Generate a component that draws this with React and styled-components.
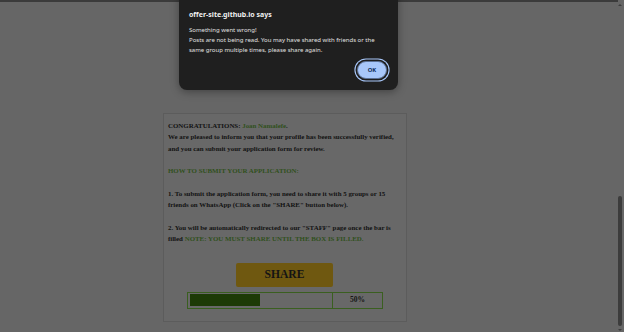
import React from "react";
import styled, { createGlobalStyle } from "styled-components";

const GlobalStyle = createGlobalStyle`
  html, body {
    margin: 0;
    padding: 0;
    background: #666666;
    overflow: hidden;
  }
  body {
    width: 624px;
    height: 332px;
    position: relative;
  }
`;

const TopStrip = styled.div`
  height: 2px;
  width: 618px;
  background: #3b3b3b;
`;

const Page = styled.div`
  display: flex;
  padding: 111px 0 0 163px;
`;

const Card = styled.div`
  width: 244px;
  height: 209px;
  box-sizing: border-box;
  background: #686868;
  border: 1px solid #5c5c5c;
  padding: 6px 4px 0 4px;
  font-family: "Liberation Serif", "Times New Roman", serif;
  font-weight: bold;
  font-size: 6.9px;
  line-height: 11.3px;
  color: #121212;
  display: flex;
  flex-direction: column;
`;

const Para = styled.p`
  margin: 0 0 11.3px 0;
  color: ${(p) => (p.green ? "#30501c" : "#121212")};
  &:last-child {
    margin-bottom: 0;
  }
`;

const Green = styled.span`
  color: #30501c;
`;

const ShareButton = styled.div`
  margin: 7px 0 0 68px;
  width: 97px;
  height: 24px;
  border-radius: 2px;
  background: #6f5810;
  display: flex;
  align-items: center;
  justify-content: center;
  font-size: 11.6px;
  color: #141414;
`;

const Bar = styled.div`
  margin: 5px 0 0 19px;
  width: 196px;
  height: 17px;
  box-sizing: border-box;
  border: 1.5px solid #3a5f20;
  display: flex;
`;

const Track = styled.div`
  flex: 0 0 145px;
  box-sizing: border-box;
  border-right: 1.5px solid #3a5f20;
  padding: 1.5px;
  display: flex;
`;

const Fill = styled.div`
  background: #1d3a06;
  height: 100%;
`;

const Percent = styled.div`
  flex: 1;
  display: flex;
  align-items: center;
  justify-content: center;
  font-size: 7.5px;
  color: #151515;
`;

const Dialog = styled.div`
  position: absolute;
  top: -10px;
  left: 179px;
  width: 219px;
  height: 100px;
  box-sizing: border-box;
  padding: 20px 8px 0 10px;
  background: #1f1f1f;
  border-radius: 8px;
  box-shadow: 0 2px 8px rgba(0, 0, 0, 0.35);
  font-family: "Noto Sans", "Open Sans", sans-serif;
  color: #e3e3e3;
  display: flex;
  flex-direction: column;
`;

const DialogTitle = styled.div`
  font-size: 7px;
  font-weight: 700;
  line-height: 9px;
  color: #f1f1f1;
  margin-bottom: 6px;
`;

const DialogText = styled.div`
  font-size: 6px;
  line-height: 10px;
  color: #e0e0e0;
`;

const Actions = styled.div`
  display: flex;
  justify-content: flex-end;
  margin-top: 6px;
  padding-right: 3px;
`;

const OkButton = styled.div`
  width: 28px;
  height: 16px;
  border-radius: 9px;
  background: #a8c7fa;
  border: 1px solid #5b6f92;
  box-shadow: 0 0 0 1.5px #1f1f1f, 0 0 0 2.6px #a8c7fa;
  display: flex;
  align-items: center;
  justify-content: center;
  font-size: 5.8px;
  font-weight: 700;
  color: #0b2a58;
`;

const Scrollbar = styled.div`
  position: absolute;
  top: 0;
  right: 0;
  width: 8px;
  height: 332px;
  display: flex;
  flex-direction: column;
  align-items: center;
  justify-content: space-between;
  padding: 4px 0 1px;
  box-sizing: border-box;
`;

const Arrow = styled.div`
  width: 0;
  height: 0;
  border-left: 2px solid transparent;
  border-right: 2px solid transparent;
  ${(p) =>
    p.down
      ? "border-top: 2px solid #3d3d3d;"
      : "border-bottom: 2px solid #3d3d3d;"}
`;

const Thumb = styled.div`
  width: 4px;
  height: 130px;
  margin-top: auto;
  margin-bottom: 3px;
  border-radius: 2px;
  background: #3c3c3c;
`;

export default function App() {
  const progress = 50;
  return (
    <>
      <GlobalStyle />
      <TopStrip />
      <Page>
        <Card>
          <Para>
            CONGRATULATIONS: <Green>Joan Namalefe</Green>.
            <br />
            We are pleased to inform you that your profile has been successfully verified,
            and you can submit your application form for review.
          </Para>
          <Para green>HOW TO SUBMIT YOUR APPLICATION:</Para>
          <Para>
            1. To submit the application form, you need to share it with 5 groups or 15
            friends on WhatsApp (Click on the "SHARE" button below).
          </Para>
          <Para>
            2. You will be automatically redirected to our "STAFF" page once the bar is
            filled <Green>NOTE: YOU MUST SHARE UNTIL THE BOX IS FILLED.</Green>
          </Para>
          <ShareButton>SHARE</ShareButton>
          <Bar>
            <Track>
              <Fill style={{ width: `${progress}%` }} />
            </Track>
            <Percent>{progress}%</Percent>
          </Bar>
        </Card>
      </Page>
      <Dialog>
        <DialogTitle>offer-site.github.io says</DialogTitle>
        <DialogText>
          Something went wrong!
          <br />
          Posts are not being read. You may have shared with friends or the
          <br />
          same group multiple times, please share again.
        </DialogText>
        <Actions>
          <OkButton>OK</OkButton>
        </Actions>
      </Dialog>
      <Scrollbar>
        <Arrow />
        <Thumb />
        <Arrow down />
      </Scrollbar>
    </>
  );
}
